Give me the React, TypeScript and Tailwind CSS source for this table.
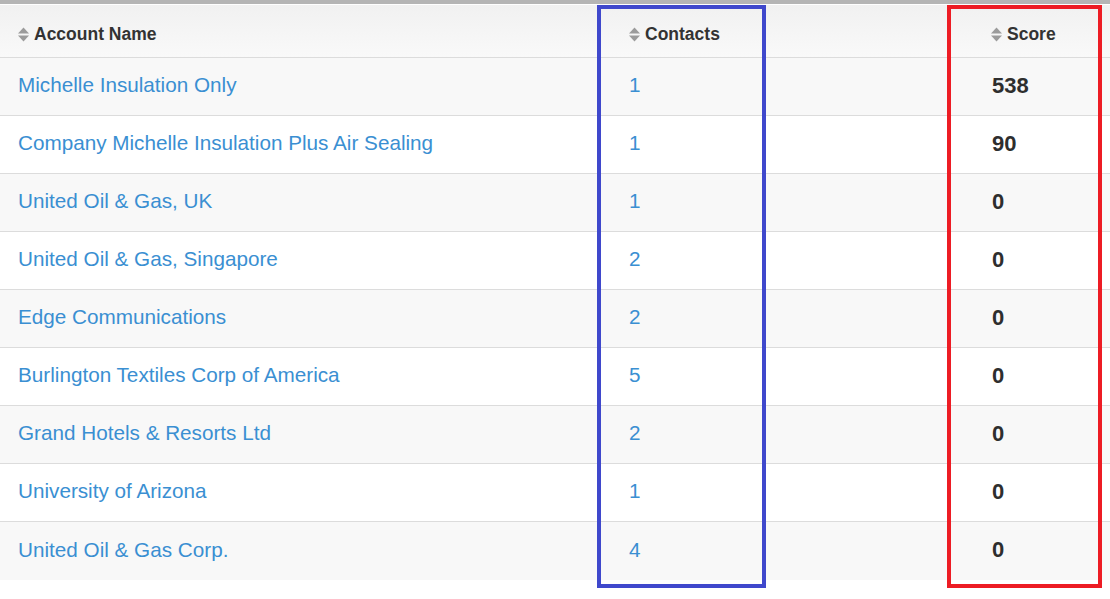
import { ReactNode } from 'react'

type Row = { name: string; contacts: number; score: number }

const ROWS: Row[] = [
  { name: 'Michelle Insulation Only', contacts: 1, score: 538 },
  { name: 'Company Michelle Insulation Plus Air Sealing', contacts: 1, score: 90 },
  { name: 'United Oil & Gas, UK', contacts: 1, score: 0 },
  { name: 'United Oil & Gas, Singapore', contacts: 2, score: 0 },
  { name: 'Edge Communications', contacts: 2, score: 0 },
  { name: 'Burlington Textiles Corp of America', contacts: 5, score: 0 },
  { name: 'Grand Hotels & Resorts Ltd', contacts: 2, score: 0 },
  { name: 'University of Arizona', contacts: 1, score: 0 },
  { name: 'United Oil & Gas Corp.', contacts: 4, score: 0 },
]

const COLS = 'grid grid-cols-[611px_362px_1fr]'

function SortIcon() {
  return (
    <svg width="11" height="15" viewBox="0 0 11 15" className="shrink-0">
      <path d="M5.5 0.5 L11 6.5 L0 6.5 Z" fill="#9b9b9b" />
      <path d="M0 8.5 L11 8.5 L5.5 14.5 Z" fill="#9b9b9b" />
    </svg>
  )
}

function HeadCell({ children }: { children: ReactNode }) {
  return (
    <div className="flex items-center gap-[5px] pl-[18px] pt-[6px]">
      <SortIcon />
      <span className="text-[17.5px] font-bold text-[#333]">{children}</span>
    </div>
  )
}

export default function App() {
  return (
    <div className="relative min-h-screen bg-white font-['Liberation_Sans',Arial,sans-serif]">
      <div className="h-[4px] bg-[#b5b5b5]" />
      <div className={`${COLS} h-[54px] border-t border-white border-b border-b-[#dcdcdc] bg-gradient-to-b from-[#f1f1f1] to-[#f9f9f9]`}>
        <HeadCell>Account Name</HeadCell>
        <HeadCell>Contacts</HeadCell>
        <HeadCell>Score</HeadCell>
      </div>

      {ROWS.map((r, i) => (
        <div
          key={r.name}
          className={`${COLS} h-[58px] pb-[3px] ${i < ROWS.length - 1 ? 'border-b border-[#dcdcdc]' : ''} ${i % 2 === 0 ? 'bg-[#f8f8f8]' : 'bg-white'}`}
        >
          <div className="flex items-center pl-[18px] text-[20.7px] text-[#3a8fd2]">
            {r.name}
          </div>
          <div className="flex items-center pl-[18px] text-[20.7px] text-[#3a8fd2]">
            {r.contacts}
          </div>
          <div className="flex items-center pl-[19px] text-[22px] font-bold text-[#2e2e2e]">
            {r.score}
          </div>
        </div>
      ))}

      {/* annotation boxes */}
      <div className="pointer-events-none absolute left-[597px] top-[5px] h-[583px] w-[169px] border-4 border-[#3f48cc]" />
      <div className="pointer-events-none absolute left-[947px] top-[5px] h-[583px] w-[155px] border-4 border-[#ed1c24]" />
    </div>
  )
}
